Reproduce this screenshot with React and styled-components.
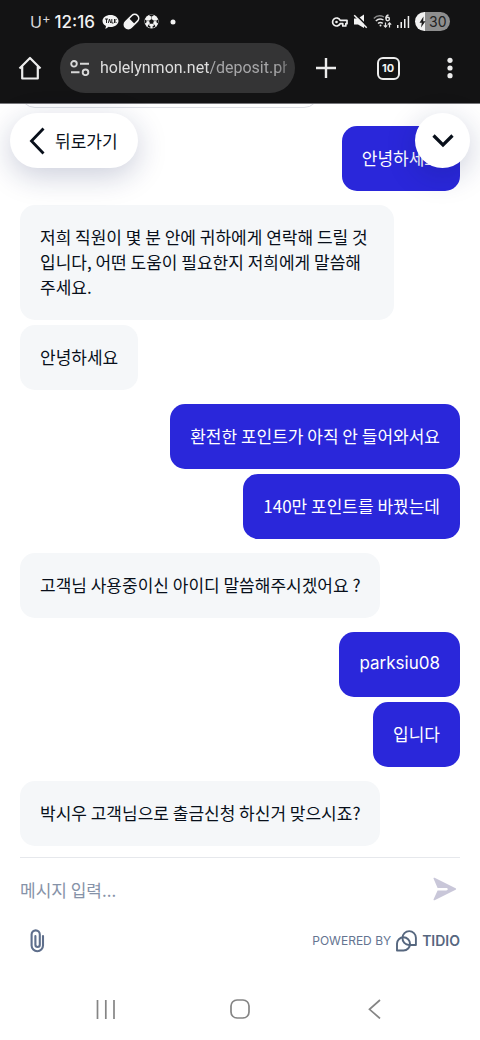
import React from "react";
import styled, { createGlobalStyle } from "styled-components";

const GlobalStyle = createGlobalStyle`
  * { box-sizing: border-box; }
  body {
    margin: 0;
    background: #fff;
    color: #080f1a;
    font-family: "Noto Sans CJK KR", "Noto Sans", sans-serif;
  }
  button { border: 0; padding: 0; background: none; color: inherit; font: inherit; cursor: pointer; }
  svg { display: block; flex: none; }
`;

const Page = styled.div`
  display: flex;
  flex-direction: column;
  min-height: 100vh;
`;

const BrowserHeader = styled.header`
  background: #131314;
  color: #f2f2f2;
  border-bottom: 1px solid #77777b;
  font-family: Inter, Roboto, sans-serif;
`;

const StatusBar = styled.div`
  display: flex;
  justify-content: space-between;
  align-items: center;
  height: 43px;
  padding: 0 30px;
`;

const StatusGroup = styled.div`
  display: flex;
  align-items: center;
  gap: ${(p) => p.$gap}px;
`;

const Carrier = styled.span`
  display: flex;
  font-size: 16px;
  line-height: 20px;
  color: #d8d8d8;
  sup { font-size: 13px; line-height: 12px; }
`;

const Clock = styled.time`
  font-size: 17px;
  line-height: 20px;
  font-weight: 500;
  margin-right: 3px;
`;

const Battery = styled.span`
  display: flex;
  align-items: center;
  gap: 3px;
  width: 35px;
  height: 19px;
  padding-left: 4px;
  border-radius: 10px;
  background: linear-gradient(90deg, #f2f2f2 30%, #8e8e8e 30%);
  color: #222;
  font-size: 14px;
  line-height: 19px;
`;

const AddressRow = styled.div`
  display: flex;
  align-items: center;
  height: 60px;
  padding: 0 18px 10px;
`;

const IconButton = styled.button`
  display: grid;
  place-items: center;
  width: ${(p) => p.$size || 24}px;
  height: ${(p) => p.$size || 24}px;
`;

const AddressBar = styled.button`
  && {
    display: flex;
    align-items: center;
    gap: 10px;
    flex: 1;
    min-width: 0;
    height: 50px;
    margin: 0 19px 0 18px;
    padding: 0 8px 0 10px;
    border-radius: 25px;
    background: #343435;
    color: #a6a6a8;
    font-family: Roboto, sans-serif;
    font-size: 16px;
    line-height: 24px;
    text-align: left;
  }
`;

const Url = styled.span`
  flex: 1;
  min-width: 0;
  overflow: hidden;
  white-space: nowrap;
  mask-image: linear-gradient(90deg, #000 94%, rgba(0, 0, 0, 0.5));
`;

const Domain = styled.span`
  color: #dedede;
`;

const BarActions = styled.div`
  display: flex;
  align-items: center;
  gap: 38px;
`;

const TabCount = styled.span`
  display: grid;
  place-items: center;
  width: 23px;
  height: 23px;
  border: 2px solid #ececec;
  border-radius: 6px;
  font-size: 11px;
  line-height: 14px;
  font-weight: 700;
`;

const Chat = styled.main`
  position: relative;
  display: flex;
  flex-direction: column;
  padding: 0 20px;
`;

const Floating = styled.button`
  && {
    position: absolute;
    top: 9px;
    ${(p) => p.$side}: 10px;
    display: flex;
    align-items: center;
    justify-content: center;
    gap: 10px;
    height: 55px;
    min-width: 55px;
    padding: 0 ${(p) => (p.$label ? 20 : 0)}px 0 ${(p) => (p.$label ? 19 : 0)}px;
    border-radius: 28px;
    background: #fff;
    box-shadow: 0 8px 30px rgba(20, 30, 90, 0.22);
    font-size: 17px;
    line-height: 25px;
  }
`;

const ScrolledPast = styled.div`
  display: flex;
  align-items: flex-end;
  height: 4px;
  margin-bottom: 18px;
  overflow: hidden;
`;

const OutlinedCard = styled.div`
  width: 68%;
  height: 40px;
  flex: none;
  border: 1px solid #dcdee4;
  border-radius: 15px;
`;

const Thread = styled.div`
  display: flex;
  flex-direction: column;
  gap: 14px;
  margin-bottom: 11px;
`;

const Group = styled.div`
  display: flex;
  flex-direction: column;
  align-items: ${(p) => (p.$mine ? "flex-end" : "flex-start")};
  gap: 5px;
`;

const Bubble = styled.p`
  margin: 0;
  max-width: 85%;
  padding: 19px 20px 21px;
  border-radius: 15px;
  background: ${(p) => (p.$mine ? "#2a27da" : "#f5f7f9")};
  color: ${(p) => (p.$mine ? "#fff" : "#080f1a")};
  font-size: 17px;
  line-height: 25px;
  ${(p) => p.$latin && "font-family: Inter, sans-serif;"}
`;

const Composer = styled.form`
  margin: 0 20px;
  border-top: 1px solid #e6e8ec;
`;

const InputRow = styled.div`
  display: flex;
  align-items: center;
  height: 62px;
`;

const MessageInput = styled.input`
  flex: 1;
  min-width: 0;
  border: 0;
  padding: 0;
  outline: 0;
  background: none;
  font-family: inherit;
  font-size: 17px;
  line-height: 25px;
  &::placeholder { color: #8692a8; opacity: 1; }
`;

const ToolRow = styled.div`
  display: flex;
  align-items: center;
  justify-content: space-between;
  height: 42px;
  padding-left: 5px;
`;

const Powered = styled.a`
  display: flex;
  align-items: center;
  gap: 5px;
  color: #647491;
  font-family: Inter, sans-serif;
  font-size: 12px;
  line-height: 20px;
  text-decoration: none;
`;

const Brand = styled.strong`
  font-size: 14px;
  font-weight: 600;
  color: #56677f;
`;

const SystemNav = styled.nav`
  display: flex;
  justify-content: space-between;
  align-items: center;
  height: 62px;
  margin-top: auto;
  padding: 0 94px;
`;

const thread = [
  { mine: true, messages: ["안녕하세요"] },
  {
    mine: false,
    messages: [
      "저희 직원이 몇 분 안에 귀하에게 연락해 드릴 것입니다, 어떤 도움이 필요한지 저희에게 말씀해 주세요.",
      "안녕하세요",
    ],
  },
  { mine: true, messages: ["환전한 포인트가 아직 안 들어와서요", "140만 포인트를 바꿨는데"] },
  { mine: false, messages: ["고객님 사용중이신 아이디 말씀해주시겠어요 ?"] },
  { mine: true, messages: ["parksiu08", "입니다"] },
  { mine: false, messages: ["박시우 고객님으로 출금신청 하신거 맞으시죠?"] },
];

const isLatin = (text) => !/[가-힣]/.test(text);

const TalkIcon = () => (
  <svg width="17" height="16" viewBox="0 0 17 16">
    <path d="M8.500 1C4 1 .5 3.600.5 7c0 2.200 1.400 4 3.500 5l-.6 3 3.300-2.200c.6.1 1.200.2 1.800.2 4.500 0 8-2.700 8-6s-3.500-6-8-6z" fill="#f4f4f4" />
    <path d="M3 5h3M4.500 5v4M6.300 9l1.200-4 1.200 4M9.800 5v4h1.700M12.500 5v4M14.500 5l-2 2 2 2" fill="none" stroke="#222" strokeWidth="1" />
  </svg>
);

const PillIcon = () => (
  <svg width="17" height="17" viewBox="0 0 17 17">
    <g transform="rotate(-45 8.500 8.500)">
      <rect x="0" y="4.500" width="17" height="8" rx="4" fill="none" stroke="#f4f4f4" strokeWidth="1.600" />
      <path d="M9 4.500H4a4 4 0 0 0 0 8h5z" fill="#f4f4f4" />
    </g>
  </svg>
);

const BallIcon = () => (
  <svg width="15" height="15" viewBox="0 0 15 15">
    <circle cx="7.500" cy="7.500" r="7" fill="#f4f4f4" />
    <path d="M7.500 5l2.500 1.800-1 2.900H6L5 6.800zM5 1.200l2.500 1.500L10 1.200l-2.500-.7zM1 5.500l1.800 1.200L2 9.500.8 8.500zM14 5.500l-1.800 1.200.8 2.800 1.200-1zM3.500 12.500l.8-1.800 2.200 1.800-.3 1.500zM11.500 12.500l-.8-1.800-2.200 1.800.3 1.500z" fill="#151515" />
    <path d="M7.500 5V2.700M10 6.800l2.200-.1M9 9.700l1.700 1.300M6 9.700L4.300 11M5 6.800l-2.200-.1" stroke="#555" strokeWidth=".6" />
  </svg>
);

const KeyIcon = () => (
  <svg width="17" height="12" viewBox="0 0 17 12" fill="none" stroke="#f0f0f0" strokeWidth="1.700">
    <path d="M9.200 4.300H16v3.400h-1.200V10h-3V7.700H9.200a4 4 0 1 1 0-3.400z" strokeLinejoin="round" />
    <circle cx="5.500" cy="6" r="1.300" fill="#f0f0f0" stroke="none" />
  </svg>
);

const MuteIcon = () => (
  <svg width="15" height="15" viewBox="0 0 15 15">
    <path d="M1 4.500h4L11 .5v13.500L5 10.500H1z" fill="#f2f2f2" />
    <path d="M2.500.5l12 12" stroke="#131314" strokeWidth="1.600" />
    <path d="M1.200 1.200l12.500 12.500" stroke="#f2f2f2" strokeWidth="1.500" />
  </svg>
);

const WifiIcon = () => (
  <svg width="19" height="15" viewBox="0 0 19 15" fill="none" stroke="#e4e4e4" strokeWidth="1.400">
    <path d="M.8 4.500C3.500 1.700 7.500 1.200 11 3" stroke="#8a8a8a" />
    <path d="M2.800 7C5 4.800 8 4.700 10.500 6M5 9.500c1.300-1.200 3.200-1.300 4.800-.2" />
    <circle cx="7.500" cy="11.500" r="1" fill="#e4e4e4" stroke="none" />
    <path d="M15.500 1c-2 .5-2.700 2-2.700 3.500" />
    <circle cx="14.700" cy="5" r="1.700" />
    <path d="M12.500 8.500V13M10.800 11.400l1.700 1.800 1.700-1.800M16.500 13.500V9M14.800 10.600l1.700-1.800 1.700 1.800" strokeWidth="1.200" />
  </svg>
);

const SignalIcon = () => (
  <svg width="13" height="14" viewBox="0 0 13 14" fill="#f0f0f0">
    <rect x="0" y="10" width="1.500" height="3" />
    <rect x="3.500" y="7" width="1.500" height="6" />
    <rect x="7" y="4" width="1.500" height="9" />
    <rect x="10.700" y="1" width="1.500" height="12" />
  </svg>
);

const BoltIcon = () => (
  <svg width="7" height="12" viewBox="0 0 7 12">
    <path d="M4.500.5L.5 6.700h2.300L2 11.500l4.500-6.300H4.200z" fill="#1d1d1d" />
  </svg>
);

const HomeIcon = () => (
  <svg width="24" height="24" viewBox="0 0 24 24" fill="none" stroke="#ededed" strokeWidth="2.200">
    <path d="M1.500 12.500L12 2l10.500 10.500M4.200 10.500v12h15.600v-12" strokeLinejoin="round" />
  </svg>
);

const SiteIcon = () => (
  <svg width="20" height="16" viewBox="0 0 20 16" fill="none" stroke="#d8d8d8" strokeWidth="1.900">
    <circle cx="4" cy="3.800" r="2.800" />
    <path d="M10 3.800h9M1 12.300h8.500" />
    <circle cx="15.500" cy="12.300" r="2.800" />
  </svg>
);

const PlusIcon = () => (
  <svg width="22" height="22" viewBox="0 0 22 22" stroke="#ececec" strokeWidth="2.400">
    <path d="M11 1v20M1 11h20" />
  </svg>
);

const MoreIcon = () => (
  <svg width="6" height="22" viewBox="0 0 6 22" fill="#ececec">
    <circle cx="3" cy="3.300" r="2.600" />
    <circle cx="3" cy="11" r="2.600" />
    <circle cx="3" cy="18.700" r="2.600" />
  </svg>
);

const BackIcon = () => (
  <svg width="16" height="28" viewBox="0 0 16 28" fill="none" stroke="#080f1a" strokeWidth="2.800">
    <path d="M14.500 1.500L2.500 14l12 12.500" />
  </svg>
);

const ChevronDown = () => (
  <svg width="22" height="14" viewBox="0 0 22 14" fill="none" stroke="#080f1a" strokeWidth="3.200">
    <path d="M1.500 1.500L11 11l9.500-9.500" />
  </svg>
);

const SendIcon = () => (
  <svg width="24" height="24" viewBox="0 0 24 24">
    <path d="M1.600.8l21 10.400c.7.300.7 1.100 0 1.500l-21 10.500c-.7.300-1.300-.2-1-.9L4.600 13.500h8.600c1 0 1.500-.5 1.500-1.200s-.5-1.200-1.500-1.200H4.600L.6 1.700C.3 1 .9.500 1.600.8z" fill="#c9c7d9" />
  </svg>
);

const ClipIcon = () => (
  <svg width="15" height="24" viewBox="0 0 15 24" fill="none" stroke="#5f6f8c" strokeWidth="2.100" strokeLinecap="round">
    <path d="M13 7v9.500a5.700 5.700 0 0 1-11.400 0V5.500a4.100 4.100 0 0 1 8.200 0v10.300a2.200 2.200 0 0 1-4.400 0V7" />
  </svg>
);

const TidioIcon = () => (
  <svg width="21" height="22" viewBox="0 0 21 22" fill="none" stroke="#56677f" strokeWidth="1.900" strokeLinejoin="round">
    <path d="M6.500 7.800a6.700 6.700 0 0 1 13.400 0V15h-6.700a6.700 6.700 0 0 1-6.700-7.200z" />
    <path d="M1 20.500v-6.700a6.500 6.500 0 1 1 13 0 6.500 6.500 0 0 1-6.500 6.700z" />
  </svg>
);

const RecentsIcon = () => (
  <svg width="20" height="20" viewBox="0 0 20 20" stroke="#858585" strokeWidth="1.700">
    <path d="M1.500 1v19M9.800 1v19M18 1v19" />
  </svg>
);

const NavHomeIcon = () => (
  <svg width="20" height="20" viewBox="0 0 20 20" fill="none" stroke="#858585" strokeWidth="1.700">
    <rect x="1" y="1" width="18" height="18" rx="6" />
  </svg>
);

const NavBackIcon = () => (
  <svg width="13" height="20" viewBox="0 0 13 20" fill="none" stroke="#858585" strokeWidth="1.700">
    <path d="M12 1L1.500 10.300 12 19.500" />
  </svg>
);

export default function App() {
  return (
    <Page>
      <GlobalStyle />
      <BrowserHeader>
        <StatusBar>
          <StatusGroup $gap={4}>
            <Carrier>U<sup>+</sup></Carrier>
            <Clock>12:16</Clock>
            <TalkIcon />
            <PillIcon />
            <BallIcon />
            <svg width="20" height="6" viewBox="0 0 20 6"><circle cx="10" cy="3" r="2.500" fill="#f2f2f2" /></svg>
          </StatusGroup>
          <StatusGroup $gap={5}>
            <KeyIcon />
            <MuteIcon />
            <WifiIcon />
            <SignalIcon />
            <Battery><BoltIcon />30</Battery>
          </StatusGroup>
        </StatusBar>
        <AddressRow>
          <IconButton aria-label="Home"><HomeIcon /></IconButton>
          <AddressBar>
            <SiteIcon />
            <Url><Domain>holelynmon.net</Domain>/deposit.php</Url>
          </AddressBar>
          <BarActions>
            <IconButton aria-label="New tab"><PlusIcon /></IconButton>
            <IconButton aria-label="Tabs"><TabCount>10</TabCount></IconButton>
            <IconButton aria-label="More"><MoreIcon /></IconButton>
          </BarActions>
        </AddressRow>
      </BrowserHeader>

      <Chat>
        <ScrolledPast><OutlinedCard /></ScrolledPast>
        <Thread>
          {thread.map((group, i) => (
            <Group key={i} $mine={group.mine}>
              {group.messages.map((text) => (
                <Bubble key={text} $mine={group.mine} $latin={isLatin(text)}>{text}</Bubble>
              ))}
            </Group>
          ))}
        </Thread>
        <Floating $side="left" $label><BackIcon />뒤로가기</Floating>
        <Floating $side="right" aria-label="Minimize"><ChevronDown /></Floating>
      </Chat>

      <Composer onSubmit={(e) => e.preventDefault()}>
        <InputRow>
          <MessageInput type="text" aria-label="메시지 입력" placeholder="메시지 입력..." />
          <IconButton type="submit" aria-label="Send" $size={30}><SendIcon /></IconButton>
        </InputRow>
        <ToolRow>
          <IconButton type="button" aria-label="Attach"><ClipIcon /></IconButton>
          <Powered href="#tidio">POWERED BY <TidioIcon /><Brand>TIDIO</Brand></Powered>
        </ToolRow>
      </Composer>

      <SystemNav>
        <IconButton aria-label="Recents"><RecentsIcon /></IconButton>
        <IconButton aria-label="Home screen"><NavHomeIcon /></IconButton>
        <IconButton aria-label="Back"><NavBackIcon /></IconButton>
      </SystemNav>
    </Page>
  );
}
